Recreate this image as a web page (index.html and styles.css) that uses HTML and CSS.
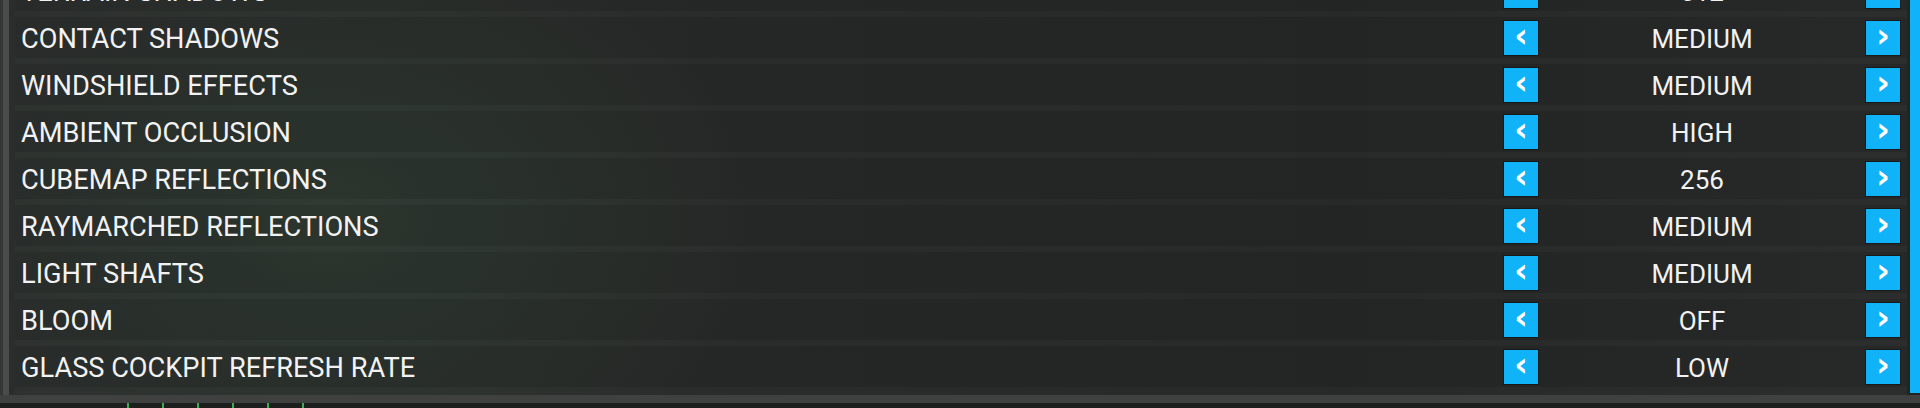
FILE: index.html
```html
<!DOCTYPE html>
<html>
<head lang="en">
    <meta charset="UTF-8">
    <title>Graphics</title>
    <link rel="stylesheet" href="styles.css">
</head>
<body>
<div class="screen">
    <div class="main">
        <div class="rail"><div class="rail-line"></div></div>
        <ul class="list">
            <li class="row"><span class="label">TERRAIN SHADOWS</span><div class="ctrl"><span class="btn">&lsaquo;</span><span class="value">512</span><span class="btn">&rsaquo;</span></div></li>
            <li class="row"><span class="label">CONTACT SHADOWS</span><div class="ctrl"><span class="btn">&lsaquo;</span><span class="value">MEDIUM</span><span class="btn">&rsaquo;</span></div></li>
            <li class="row"><span class="label">WINDSHIELD EFFECTS</span><div class="ctrl"><span class="btn">&lsaquo;</span><span class="value">MEDIUM</span><span class="btn">&rsaquo;</span></div></li>
            <li class="row"><span class="label">AMBIENT OCCLUSION</span><div class="ctrl"><span class="btn">&lsaquo;</span><span class="value">HIGH</span><span class="btn">&rsaquo;</span></div></li>
            <li class="row"><span class="label">CUBEMAP REFLECTIONS</span><div class="ctrl"><span class="btn">&lsaquo;</span><span class="value">256</span><span class="btn">&rsaquo;</span></div></li>
            <li class="row"><span class="label">RAYMARCHED REFLECTIONS</span><div class="ctrl"><span class="btn">&lsaquo;</span><span class="value">MEDIUM</span><span class="btn">&rsaquo;</span></div></li>
            <li class="row"><span class="label">LIGHT SHAFTS</span><div class="ctrl"><span class="btn">&lsaquo;</span><span class="value">MEDIUM</span><span class="btn">&rsaquo;</span></div></li>
            <li class="row"><span class="label">BLOOM</span><div class="ctrl"><span class="btn">&lsaquo;</span><span class="value">OFF</span><span class="btn">&rsaquo;</span></div></li>
            <li class="row"><span class="label">GLASS COCKPIT REFRESH RATE</span><div class="ctrl"><span class="btn">&lsaquo;</span><span class="value">LOW</span><span class="btn">&rsaquo;</span></div></li>
        </ul>
        <div class="scroll"></div>
    </div>
    <div class="bottom">
        <div class="bottom-line"></div>
        <div class="ticks">
            <i></i><i></i><i></i><i></i><i></i><i></i>
        </div>
    </div>
</div>
</body>
</html>
```

FILE: styles.css
```css
* {
    padding: 0;
    margin: 0;
    list-style: none;
    box-sizing: border-box;
}

body {
    width: 1920px;
    height: 408px;
    overflow: hidden;
    font-family: Roboto, "Liberation Sans", sans-serif;
    color: #f2f2f2;
    background: radial-gradient(ellipse 420px 300px at 330px 220px, #27332a 0%, rgba(39, 51, 42, 0) 100%),
                linear-gradient(90deg, #242726 0%, #212322 40%, #1f2120 70%, #232524 100%);
}

.screen {
    display: flex;
    flex-direction: column;
    height: 408px;
}

.main {
    display: flex;
    height: 395px;
    overflow: hidden;
}

.rail {
    width: 15px;
    background: #2b2d2c;
    border-left: 3px solid #353736;
    height: 400px;
}

.rail-line {
    width: 6px;
    height: 100%;
    background: #4a4c4b;
}

.list {
    width: 1892px;
    display: flex;
    flex-direction: column;
    gap: 6px;
    margin-top: -30px;
    padding-bottom: 8px;
    background: rgba(255, 255, 255, 0.045);
}

.row {
    height: 41px;
    flex: none;
    display: flex;
    align-items: center;
    justify-content: space-between;
    padding: 0 7px 0 6px;
    background: rgba(0, 0, 0, 0.1);
}

.label {
    font-size: 27.2px;
    padding-top: 2px;
}

.ctrl {
    display: flex;
    align-items: center;
}

.btn {
    width: 34px;
    height: 34px;
    background: #10b3f8;
    box-shadow: 0 0 0 1px rgba(0, 0, 0, 0.35);
    color: #fff;
    font-family: "DejaVu Sans", sans-serif;
    font-weight: bold;
    font-size: 33px;
    line-height: 30px;
    text-align: center;
}

.value {
    width: 328px;
    text-align: center;
    font-size: 26px;
    padding-top: 2px;
}

.scroll {
    width: 10px;
    margin-left: 3px;
    height: 393px;
    background: #10b3f8;
}

.bottom {
    height: 13px;
    background: #1c1f1d;
}

.bottom-line {
    height: 8px;
    background: #3e413f;
}

.ticks {
    display: flex;
    gap: 33px;
    padding-left: 127px;
}

.ticks i {
    display: block;
    width: 2px;
    height: 5px;
    background: #3fae52;
}
```
